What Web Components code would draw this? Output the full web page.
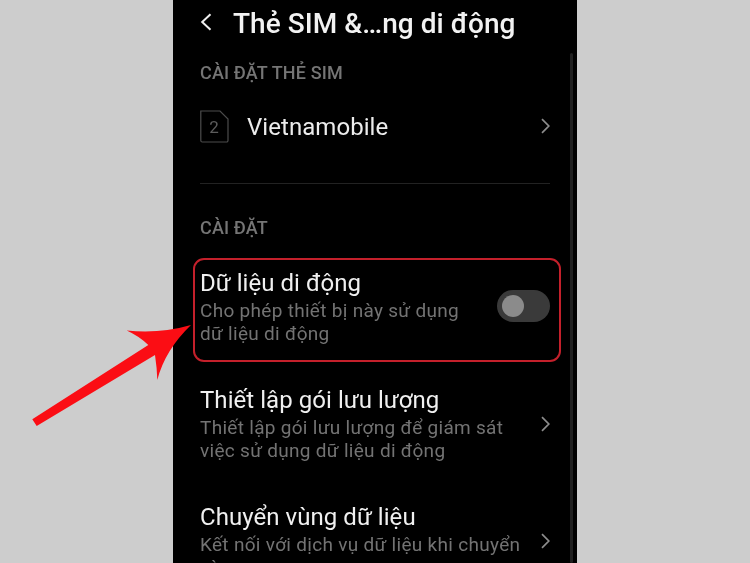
<!DOCTYPE html>
<html lang="vi">
<head>
<meta charset="utf-8">
<style>
html,body{margin:0;padding:0;height:563px;overflow:hidden;background:#cdcdcd;font-family:Roboto,"Liberation Sans",sans-serif}
</style>
</head>
<body>
<x-stage>
  <x-phone>
    <x-appbar title-text="Thẻ SIM &amp;…ng di động"></x-appbar>
    <x-section-label style="--top:17px">CÀI ĐẶT THẺ SIM</x-section-label>
    <x-sim-row name="Vietnamobile" number="2"></x-sim-row>
    <x-divider></x-divider>
    <x-section-label style="--top:34px">CÀI ĐẶT</x-section-label>
    <x-highlight>
      <x-setting title-text="Dữ liệu di động">
        Cho phép thiết bị này sử dụng<br>dữ liệu di động
        <x-toggle slot="end"></x-toggle>
      </x-setting>
    </x-highlight>
    <x-setting style="--top:24px" title-text="Thiết lập gói lưu lượng">
      Thiết lập gói lưu lượng để giám sát<br>việc sử dụng dữ liệu di động
      <x-chevron slot="end"></x-chevron>
    </x-setting>
    <x-setting style="--top:41px" title-text="Chuyển vùng dữ liệu">
      Kết nối với dịch vụ dữ liệu khi chuyển<br>vùng
      <x-chevron slot="end"></x-chevron>
    </x-setting>
  </x-phone>
  <x-arrow></x-arrow>
</x-stage>
<script>
function def(name, css, html){
  customElements.define(name, class extends HTMLElement{
    connectedCallback(){
      if(this.shadowRoot) return;
      const r=this.attachShadow({mode:'open'});
      const attr=k=>(this.getAttribute(k)||'').replace(/&/g,'&amp;');
      r.innerHTML='<style>'+css+'</style>'+(typeof html==='function'?html(attr):html);
    }
  });
}
def('x-stage',':host{display:flex;justify-content:center;position:relative;width:750px;height:563px;overflow:hidden}','<slot></slot>');
def('x-phone',`:host{display:block;box-sizing:border-box;width:404px;height:563px;background:#000;padding:0 27px;color:#fff;position:relative;overflow:hidden;filter:blur(.3px)}
  .bar{position:absolute;right:4px;top:53px;bottom:0;width:3px;background:#1f1f1f;border-radius:2px}`,
  '<slot></slot><div class="bar"></div>');
def('x-appbar',`:host{display:flex;align-items:center;height:46px;gap:21px}
  svg{width:12px;height:18px;flex:none;margin-top:-2px}
  span{font-size:28px;font-weight:500;white-space:nowrap;color:#f2f2f2;letter-spacing:.05px}`,
  a=>`<svg viewBox="0 0 12 18"><path d="M10.500 1.200 2.200 9l8.300 7.800" fill="none" stroke="#eee" stroke-width="2"/></svg><span>${a('title-text')}</span>`);
def('x-section-label',`:host{display:block;margin-top:var(--top,0);font-size:18px;line-height:20px;font-weight:500;color:#757575;letter-spacing:.15px}`,'<slot></slot>');
def('x-sim-row',`:host{display:flex;align-items:center;height:64px;margin-top:12px}
  svg{width:29px;height:33px;flex:none;margin:-2px 18px 0 0}
  span{flex:1;font-size:24px;color:#ececec;letter-spacing:.05px}
  x-chevron{margin-top:-2px}
  text{font:17px Roboto,sans-serif;fill:#5c5c5c}`,
  a=>`<svg viewBox="0 0 29 33"><path d="M.800 1H20L28 9V30.500a1.500 1.500 0 0 1-1.500 1.500H2.300A1.500 1.500 0 0 1 .800 30.500Z" fill="none" stroke="#4c4c4c" stroke-width="1.200"/><text x="14" y="23" text-anchor="middle">${a('number')}</text></svg><span>${a('name')}</span><x-chevron></x-chevron>`);
def('x-divider',`:host{display:block;height:1px;background:#222;margin-top:24px}`,'');
def('x-highlight',`:host{display:block;box-sizing:border-box;height:104px;margin:20px -11px 0 -7px;padding:9px 9px 0 5px;border:2px solid #c4202b;border-radius:11px}`,'<slot></slot>');
def('x-setting',`:host{display:flex;align-items:center;margin-top:var(--top,0)}
  .t{flex:1;min-width:0}
  .h{font-size:24px;line-height:28px;color:#f0f0f0;letter-spacing:.05px;white-space:nowrap}
  .s{font-size:19px;line-height:23px;color:#737373;margin-top:2px;white-space:nowrap;letter-spacing:.3px}`,
  a=>`<div class="t"><div class="h">${a('title-text')}</div><div class="s"><slot></slot></div></div><slot name="end"></slot>`);
def('x-chevron',`:host{display:block;flex:none;width:9px;height:16px}
  svg{display:block;width:9px;height:16px}`,
  '<svg viewBox="0 0 9 16"><path d="M1 1.200 7.800 8 1 14.800" fill="none" stroke="#8c8c8c" stroke-width="1.700"/></svg>');
def('x-toggle',`:host{display:block;flex:none;box-sizing:border-box;width:53px;height:32px;border-radius:16px;background:#3a3a3a;padding:5px 5px;margin-top:-3px}
  i{display:block;width:22px;height:22px;border-radius:50%;background:#8b8b8b}`,'<i></i>');
def('x-arrow',`:host{position:absolute;left:0;top:0;width:750px;height:563px;pointer-events:none}
  svg{display:block;width:750px;height:563px}`,
  '<svg viewBox="0 0 750 563"><path d="M191 325Q160 334 126.700 330.500Q139 336 148.300 345L32.300 419.300 36.700 426 155 355Q157 368 157.300 380Q165 350 191 325Z" fill="#fb0d14"/></svg>');
</script>
</body>
</html>
